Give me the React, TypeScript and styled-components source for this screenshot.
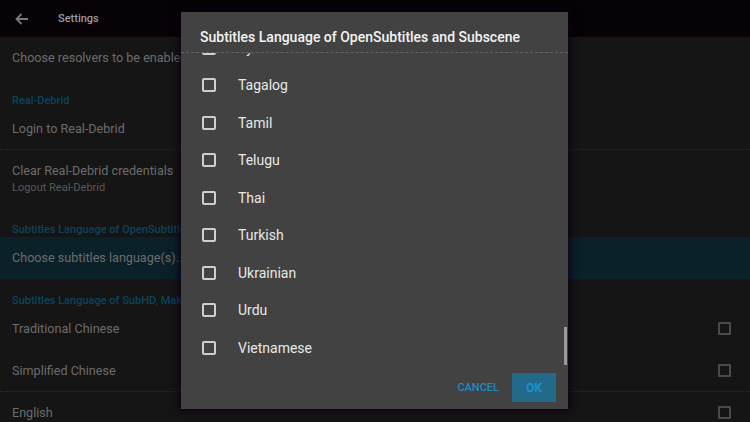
import React from "react";
import styled, { createGlobalStyle } from "styled-components";

const Global = createGlobalStyle`
  html, body { margin: 0; padding: 0; background: #070307; }
  body { font-family: Roboto, "Noto Sans", sans-serif; overflow: hidden; }
  * { box-sizing: border-box; }
`;

const Screen = styled.div`
  position: relative;
  width: 750px;
  height: 422px;
  overflow: hidden;
  background: #070307;
  display: flex;
  flex-direction: column;
`;

const TopBar = styled.header`
  height: 37px;
  flex: none;
  display: flex;
  align-items: center;
  padding-left: 15px;
  gap: 29px;
  background: #060206;
`;

const BarTitle = styled.span`
  font-size: 11px;
  font-weight: 500;
  color: #9c9c9c;
`;

const Panel = styled.main`
  flex: 1;
  background: #151515;
  display: flex;
  flex-direction: column;
`;

const Category = styled.div`
  padding: 15px 12px 1px;
  font-size: 11px;
  line-height: 13px;
  font-weight: 500;
  color: #0b445d;
  white-space: nowrap;
`;

const Row = styled.div<{ $selected?: boolean; $divider?: boolean; $tall?: boolean }>`
  display: flex;
  align-items: center;
  justify-content: space-between;
  height: ${(p) => (p.$tall ? "58px" : "42px")};
  padding: 0 19px 0 12px;
  background: ${(p) => (p.$selected ? "#0a2129" : "transparent")};
  border-bottom: 1px dotted ${(p) => (p.$divider ? "#2a2a2a" : "transparent")};
  flex: none;
`;

const RowText = styled.div`
  display: flex;
  flex-direction: column;
`;

const RowTitle = styled.span`
  font-size: 12.6px;
  line-height: 18px;
  color: #6c6c6c;
  white-space: nowrap;
`;

const RowSummary = styled.span`
  font-size: 11px;
  line-height: 15px;
  color: #595959;
`;

const PrefBox = styled.span`
  width: 13px;
  height: 13px;
  border: 2px solid #4a4a4a;
  border-radius: 1px;
`;

const Overlay = styled.div`
  position: absolute;
  inset: 0;
`;

const Dialog = styled.section`
  position: absolute;
  left: 181px;
  top: 12px;
  width: 387px;
  height: 397px;
  background: #424242;
  display: flex;
  flex-direction: column;
  box-shadow: 0 0 8px 2px rgba(14, 0, 20, 0.95);
`;

const DialogTitle = styled.h2`
  margin: 0;
  padding: 15px 19px 5px;
  font-size: 14px;
  line-height: 20px;
  font-weight: 500;
  color: #f4f4f4;
  white-space: nowrap;
`;

const Divider = styled.div`
  border-top: 1px dashed #626262;
`;

const Viewport = styled.div`
  position: relative;
  height: 313px;
  overflow: hidden;
  flex: none;
`;

const ListInner = styled.ul<{ $offset: number }>`
  list-style: none;
  margin: ${(p) => -p.$offset}px 0 0;
  padding: 0;
`;

const Item = styled.li`
  height: 37.5px;
  display: flex;
  align-items: center;
  padding-left: 21px;
  gap: 22px;
`;

const Box = styled.span`
  width: 14px;
  height: 14px;
  border: 2px solid #cfcfcf;
  border-radius: 2px;
  flex: none;
`;

const Label = styled.span`
  font-size: 14px;
  color: #e8e8e8;
`;

const Thumb = styled.div`
  position: absolute;
  right: 1px;
  top: 274px;
  width: 3px;
  height: 38px;
  background: #9a9a9a;
`;

const Actions = styled.div`
  display: flex;
  justify-content: flex-end;
  align-items: center;
  gap: 13px;
  padding: 7px 12px;
`;

const TextButton = styled.button`
  background: none;
  border: none;
  padding: 0;
  font-family: inherit;
  font-size: 11px;
  font-weight: 500;
  color: #1d8cc4;
`;

const FilledButton = styled(TextButton)`
  width: 44px;
  height: 29px;
  background: #22698a;
  color: #1b93cc;
  font-size: 12px;
  font-weight: 700;
`;

const languages = [
  "Syriac",
  "Tagalog",
  "Tamil",
  "Telugu",
  "Thai",
  "Turkish",
  "Ukrainian",
  "Urdu",
  "Vietnamese",
];

const BackArrow = () => (
  <svg width="14" height="12" viewBox="0 0 14 12" fill="none">
    <path d="M13 6H1.8M6.5 1 1.5 6l5 5" stroke="#7a7a7a" strokeWidth="1.8" />
  </svg>
);

export default function App() {
  return (
    <>
      <Global />
      <Screen>
        <TopBar>
          <BackArrow />
          <BarTitle>Settings</BarTitle>
        </TopBar>
        <Panel>
          <Row>
            <RowTitle>Choose resolvers to be enabled</RowTitle>
          </Row>
          <Category>Real-Debrid</Category>
          <Row $divider>
            <RowTitle>Login to Real-Debrid</RowTitle>
          </Row>
          <Row $tall>
            <RowText>
              <RowTitle>Clear Real-Debrid credentials</RowTitle>
              <RowSummary>Logout Real-Debrid</RowSummary>
            </RowText>
          </Row>
          <Category>Subtitles Language of OpenSubtitles and Subscene</Category>
          <Row $selected>
            <RowTitle>Choose subtitles language(s)...</RowTitle>
          </Row>
          <Category>Subtitles Language of SubHD, Makedie</Category>
          <Row>
            <RowTitle>Traditional Chinese</RowTitle>
            <PrefBox />
          </Row>
          <Row $divider>
            <RowTitle>Simplified Chinese</RowTitle>
            <PrefBox />
          </Row>
          <Row>
            <RowTitle>English</RowTitle>
            <PrefBox />
          </Row>
        </Panel>
        <Overlay>
          <Dialog>
            <DialogTitle>Subtitles Language of OpenSubtitles and Subscene</DialogTitle>
            <Divider />
            <Viewport>
              <ListInner $offset={24}>
                {languages.map((l) => (
                  <Item key={l}>
                    <Box />
                    <Label>{l}</Label>
                  </Item>
                ))}
              </ListInner>
              <Thumb />
            </Viewport>
            <Actions>
              <TextButton>CANCEL</TextButton>
              <FilledButton>OK</FilledButton>
            </Actions>
          </Dialog>
        </Overlay>
      </Screen>
    </>
  );
}
